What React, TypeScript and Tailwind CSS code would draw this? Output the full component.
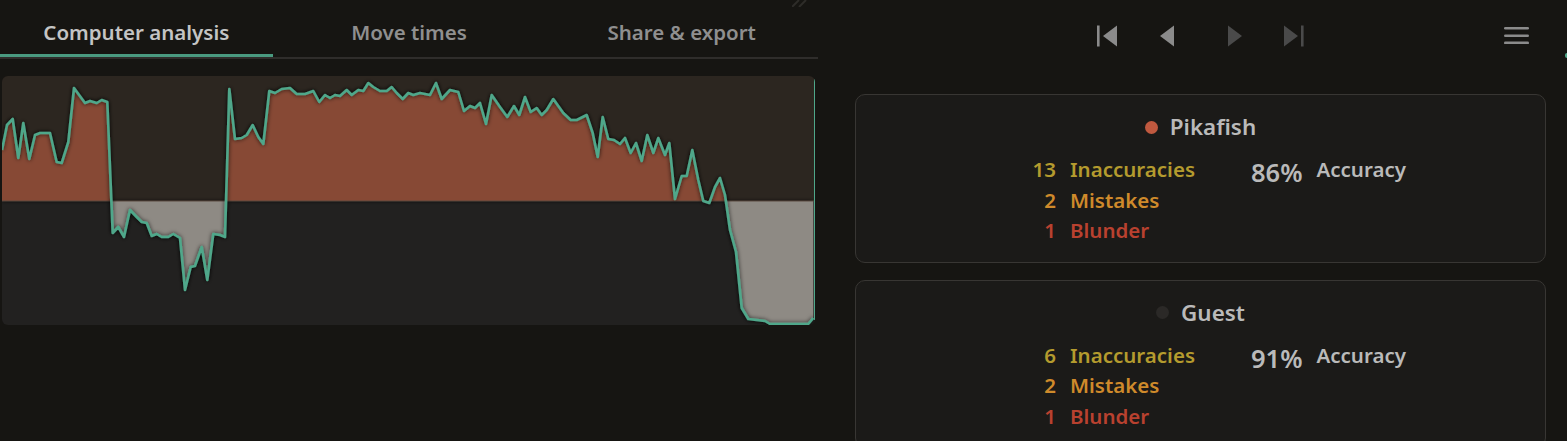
const pts: [number, number][] = [
  [2, 150], [7, 125], [12.7, 119], [18.3, 158], [23.3, 123], [29.3, 159], [35, 135], [40, 133], [50, 133],
  [56.7, 162], [61.7, 163], [68.3, 142], [74, 88], [85, 103], [90, 101], [96.7, 103], [101.7, 100], [107.3, 102],
  [112.7, 233], [118.3, 227], [124, 237], [130, 210], [136.7, 217], [141.7, 222], [146.7, 223], [151.7, 236],
  [156.7, 234], [161.7, 237], [168.3, 237], [173.3, 234], [180, 238], [185, 290], [190.7, 267], [195, 266],
  [201.7, 247], [207.3, 280], [213.3, 234], [220, 235], [225, 237], [229.3, 89], [235, 139], [241.7, 138],
  [246.7, 135], [252.7, 125], [258.3, 137], [263.3, 144], [269.3, 91], [275, 93], [281.7, 89], [290, 88],
  [296.7, 94], [305, 94], [313.3, 91], [319.3, 102], [325, 95], [330, 98], [335, 95], [340, 96], [346.7, 90],
  [351.7, 95], [358.3, 90], [363.3, 91], [368.3, 83], [373.3, 87], [380, 91], [386.7, 91], [391.7, 87],
  [396.7, 93], [402.7, 99], [408.3, 93], [413.3, 95], [420, 93], [430, 95], [436, 83], [441.7, 99], [450, 90],
  [458.3, 92], [464, 111], [470, 106], [475, 108], [480, 103], [486, 124], [491.7, 95], [500, 107], [507.3, 117],
  [514, 106], [519.3, 115], [525, 97], [530.7, 112], [536.7, 108], [541.7, 115], [546.7, 110], [553.3, 99],
  [563.3, 113], [570.7, 120], [576.7, 120], [586.7, 115], [592.7, 133], [597.7, 157], [602.7, 117], [608.3, 139],
  [614, 140], [620, 144], [625, 138], [630.7, 153], [636, 143], [641.7, 161], [647.3, 135], [653.3, 153],
  [658.3, 138], [665, 155], [669.3, 143], [675, 199], [681.7, 176], [686.7, 176], [692.3, 150], [698.3, 180],
  [703.3, 201], [709.3, 203], [715, 187], [720, 178], [725, 195], [730, 230], [736, 252], [741.7, 308],
  [748.3, 319], [765, 321], [770, 324], [808.3, 324], [813.3, 318],
];

const MID = 201;
const line = pts.map((p, i) => `${i ? "L" : "M"}${p[0]} ${p[1]}`).join(" ");
const area = `${line} L${pts[pts.length - 1][0]} ${MID} L${pts[0][0]} ${MID} Z`;

const Chart = () => (
  <div className="ml-[2px] mt-[17px] h-[249px] w-[813px] overflow-hidden rounded-[6px]">
    <svg width="813" height="249" viewBox="2 76 813 249" className="block">
      <defs>
        <clipPath id="above">
          <rect x="0" y="0" width="820" height={MID} />
        </clipPath>
        <clipPath id="below">
          <rect x="0" y={MID} width="820" height="200" />
        </clipPath>
        <filter id="glow" x="-5%" y="-20%" width="110%" height="140%">
          <feDropShadow dx="0" dy="0" stdDeviation="2.2" floodColor="#000" floodOpacity="0.8" />
        </filter>
      </defs>
      <rect x="0" y="0" width="820" height={MID} fill="#2c2620" />
      <rect x="0" y={MID} width="820" height="200" fill="#222120" />
      <g filter="url(#glow)">
        <path d={area} fill="#874836" clipPath="url(#above)" />
        <path d={area} fill="#8e8a84" clipPath="url(#below)" />
      </g>
      <line x1="0" y1={MID} x2="820" y2={MID} stroke="#5a4b41" strokeWidth="1" />
      <path d={line} fill="none" stroke="#4fa78a" strokeWidth="2.6" strokeLinejoin="round" filter="url(#glow)" />
      <line x1="814.5" y1="78" x2="814.5" y2="320" stroke="#4fa78a" strokeWidth="1" />
    </svg>
  </div>
);

const tabs = ["Computer analysis", "Move times", "Share & export"];

const NavIcon = ({ kind, dim }: { kind: number; dim?: boolean }) => {
  const c = dim ? "#4a4a4a" : "#8b8b8b";
  return (
    <button className="flex h-[40px] w-[60px] items-center justify-center">
      <svg width="60" height="22" viewBox="0 0 60 22">
        {kind === 0 && (
          <>
            <rect x="20" y="0.5" width="2.6" height="21" fill={c} />
            <polygon points="26,11 40,0.5 40,21.5" fill={c} />
          </>
        )}
        {kind === 1 && <polygon points="23,11 37,0.5 37,21.5" fill={c} />}
        {kind === 2 && <polygon points="31,0.5 45,11 31,21.5" fill={c} />}
        {kind === 3 && (
          <>
            <polygon points="27,0.5 41,11 27,21.5" fill={c} />
            <rect x="44" y="0.5" width="2.6" height="21" fill={c} />
          </>
        )}
      </svg>
    </button>
  );
};

type Stat = { n: number; label: string; color: string };

const Card = ({ name, dot, stats, acc }: { name: string; dot: string; stats: Stat[]; acc: string }) => (
  <div className="rounded-[10px] border border-[#383633] bg-[#1b1a18] pb-[16px] pt-[18px]">
    <div className="flex items-center justify-center gap-[12px] text-[22.4px] font-semibold leading-[28px] text-[#bababa]">
      <span className={`h-[13px] w-[13px] rounded-full ${dot}`} />
      <span>{name}</span>
    </div>
    <div className="mt-[13px] flex justify-center pl-[21px]">
      <div className="grid grid-cols-[40px_auto] gap-x-[14px] text-[20.5px] font-semibold leading-[30.5px]">
        {stats.map((s) => (
          <div key={s.label} className="contents">
            <span className={`text-right ${s.color}`}>{s.n}</span>
            <span className={s.color}>{s.label}</span>
          </div>
        ))}
      </div>
      <div className="ml-[56px] flex items-start gap-[14px] self-start leading-[30.5px] text-[#bababa]">
        <span className="mt-[3px] text-[25.5px] font-semibold">{acc}</span>
        <span className="text-[20.5px] font-semibold">Accuracy</span>
      </div>
    </div>
  </div>
);

const mk = (a: number, b: number, c: number): Stat[] => [
  { n: a, label: "Inaccuracies", color: "text-[#b49b2e]" },
  { n: b, label: "Mistakes", color: "text-[#cf8a2b]" },
  { n: c, label: c === 1 ? "Blunder" : "Blunders", color: "text-[#b9412f]" },
];

export default function App() {
  return (
    <div className="flex h-[441px] w-[1567px] overflow-hidden bg-[#161512] font-['Noto_Sans',sans-serif]">
      <div className="relative w-[818px] shrink-0">
        <svg className="absolute left-[792px] top-0" width="20" height="7" viewBox="0 0 20 7">
          <line x1="0" y1="7" x2="7" y2="0" stroke="#2e2c29" strokeWidth="2" />
          <line x1="7" y1="7" x2="14" y2="0" stroke="#2e2c29" strokeWidth="2" />
        </svg>
        <div className="flex">
          {tabs.map((t, i) => (
            <div key={t} className="flex flex-1 flex-col">
              <div
                className={`flex h-[54px] items-center justify-center pt-[10px] text-[20.5px] font-semibold ${
                  i === 0 ? "text-[#c4c4c4]" : "text-[#8f8f8f]"
                }`}
              >
                {t}
              </div>
              <div className={`h-[3px] ${i === 0 ? "bg-[#4a9a80]" : "bg-transparent"}`} />
            </div>
          ))}
        </div>
        <div className="h-[2px] bg-[#2f2d2b]" />
        <Chart />
      </div>
      <div className="relative flex-1 pl-[37px] pr-[21px]">
        <div className="grid h-[70px] grid-cols-[1fr_auto_1fr] items-center">
          <div />
          <div className="flex pr-[7px] pt-[2px]">
            <NavIcon kind={0} />
            <NavIcon kind={1} />
            <NavIcon kind={2} dim />
            <NavIcon kind={3} dim />
          </div>
          <div className="flex justify-end pr-[17px]">
            <svg width="25" height="18" viewBox="0 0 25 18">
              <rect x="0" y="1" width="25" height="2.6" rx="1.3" fill="#8b8b8b" />
              <rect x="0" y="8.4" width="25" height="2.6" rx="1.3" fill="#8b8b8b" />
              <rect x="0" y="15.6" width="25" height="2.6" rx="1.3" fill="#8b8b8b" />
            </svg>
          </div>
        </div>
        <div className="absolute right-0 top-[53px] h-[5px] w-[2px] rounded-l bg-[#4fa78a]" />
        <div className="mt-[24px] flex flex-col gap-[17px]">
          <Card name="Pikafish" dot="bg-[#c0593f]" stats={mk(13, 2, 1)} acc="86%" />
          <Card name="Guest" dot="bg-[#2b2927]" stats={mk(6, 2, 1)} acc="91%" />
        </div>
      </div>
    </div>
  );
}
